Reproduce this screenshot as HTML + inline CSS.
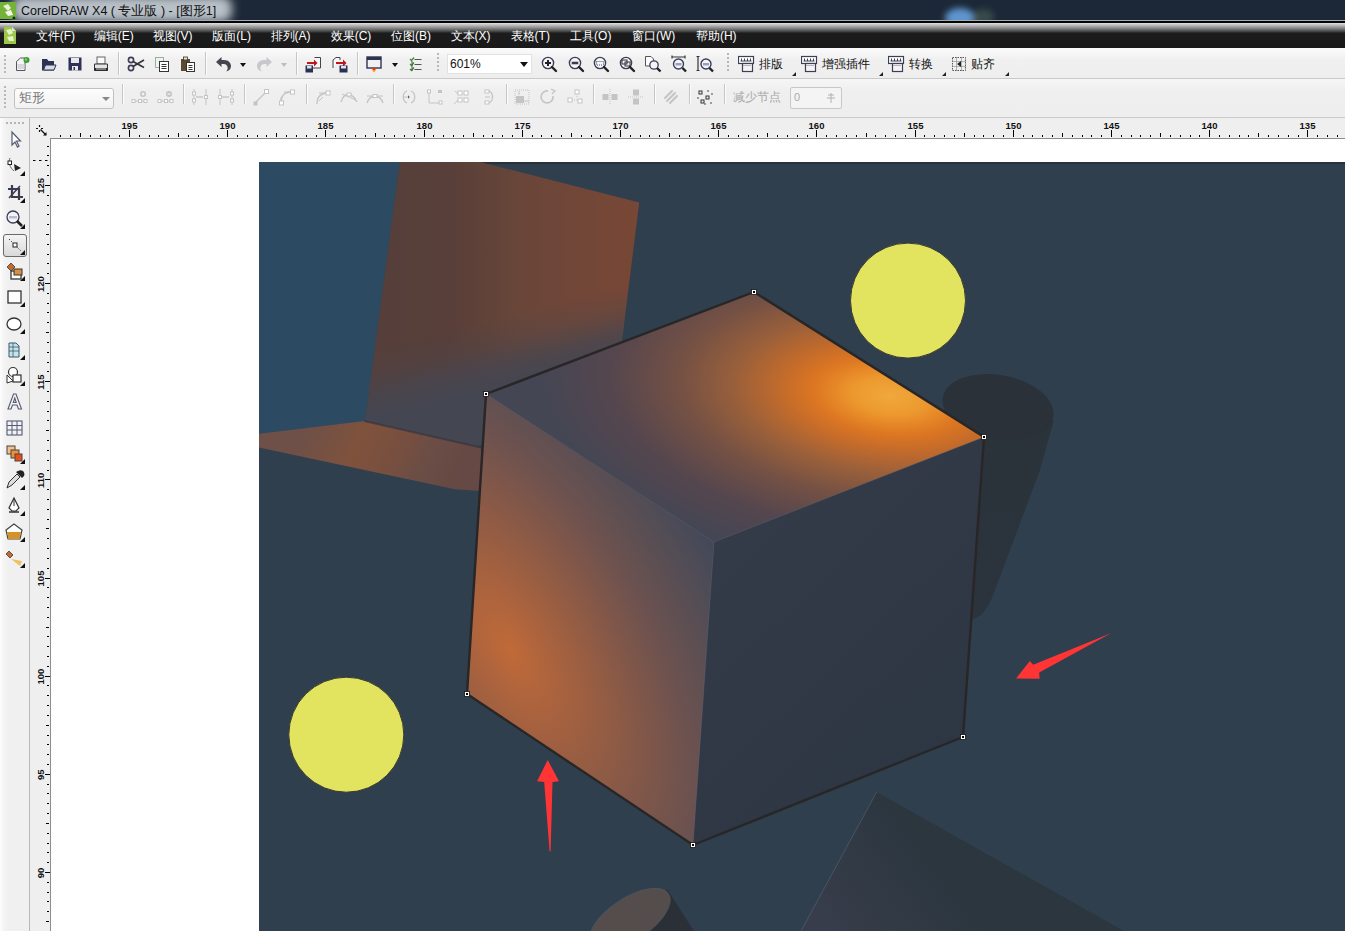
<!DOCTYPE html><html><head><meta charset="utf-8"><style>
*{margin:0;padding:0;box-sizing:border-box}
html,body{width:1345px;height:931px;overflow:hidden;background:#f0f0f0;font-family:"Liberation Sans",sans-serif}
.abs{position:absolute}
#title{left:0;top:0;width:1345px;height:20px;background:#1c2837}
#menubar{left:0;top:20px;width:1345px;height:29px;background:linear-gradient(#a6abb0 0,#a6abb0 1.3px,#050505 1.3px,#050505 2.7px,#e6e6e6 2.7px,#c8c8c8 4.5px,#8a8a8a 8px,#3a3a3a 12px,#1c1c1c 13px,#191919 28px)}
.mi{position:absolute;top:30px;color:#fff;font-size:12px;line-height:12px;white-space:nowrap}
#tb1{left:0;top:48px;width:1345px;height:30px;background:linear-gradient(#fbfbfb,#f0f0f0 40%,#eeeeee)}
#tb2{left:0;top:79px;width:1345px;height:38px;background:linear-gradient(#f6f6f6,#efefef 30%,#eeeeee)}
#l1{left:0;top:78px;width:1345px;height:1px;background:#c9c9c9}
#l2{left:0;top:117px;width:1345px;height:1px;background:#c9c9c9}
#ruler{left:0;top:118px;width:1345px;height:813px;background:#efefef}
#page{left:51px;top:139px;width:1294px;height:792px;background:#fff}
.sep{position:absolute;width:1px;background:#c4c4c4;border-right:1px solid #fff}
.tri{position:absolute;width:0;height:0;border-left:3.5px solid transparent;border-right:3.5px solid transparent;border-top:4px solid #111}
.tbt{position:absolute;font-size:12px;color:#111;line-height:12px;white-space:nowrap}
</style></head><body>
<div class="abs" id="title"></div>
<div class="abs" style="left:12px;top:-4px;width:220px;height:26px;background:#c2c9d0;border-radius:10px;filter:blur(5px);opacity:.95"></div>
<div class="abs" style="left:945px;top:8px;width:30px;height:20px;background:#6aa8e8;border-radius:50%;filter:blur(3px);opacity:.85"></div>
<div class="abs" style="left:972px;top:9px;width:22px;height:16px;background:#7a9a7a;border-radius:50%;filter:blur(3px);opacity:.3"></div>
<div class="abs" style="left:0;top:2px;width:16px;height:17px;background:#74b23a"></div>
<svg class="abs" style="left:0;top:2px" width="16" height="17"><path d="M3 4 L8 2 L11 6 L8 9 Z" fill="#e8f0d0"/><path d="M5 10 L11 8 L13 13 L8 14 Z" fill="#f4f8ea"/><circle cx="14" cy="16" r="1.5" fill="#142a0a"/></svg>
<div class="abs" style="left:21px;top:4px;font-size:12.5px;color:#101010;white-space:nowrap;line-height:15px">CorelDRAW X4 ( 专业版 ) - [图形1]</div>
<div class="abs" id="menubar"></div>
<svg class="abs" style="left:3px;top:26px" width="14" height="19"><path d="M1 1 H9 L13 5 V18 H1 Z" fill="#9bc84a"/><path d="M3 4 L8 3 L10 7 L6 9Z M4 11 L10 10 L11 15 L6 15Z" fill="#e6f2c8"/><path d="M9 1 L13 5 H9Z" fill="#dfe8cc"/></svg>
<div class="mi" style="left:35.7px">文件(F)</div>
<div class="mi" style="left:93.7px">编辑(E)</div>
<div class="mi" style="left:152.6px">视图(V)</div>
<div class="mi" style="left:212.3px">版面(L)</div>
<div class="mi" style="left:270.6px">排列(A)</div>
<div class="mi" style="left:330.7px">效果(C)</div>
<div class="mi" style="left:391px">位图(B)</div>
<div class="mi" style="left:450.6px">文本(X)</div>
<div class="mi" style="left:510.6px">表格(T)</div>
<div class="mi" style="left:570.1px">工具(O)</div>
<div class="mi" style="left:632px">窗口(W)</div>
<div class="mi" style="left:695.9px">帮助(H)</div>
<div class="abs" id="tb1"></div><div class="abs" id="l1"></div><div class="abs" id="tb2"></div><div class="abs" id="l2"></div>
<div class="abs" id="ruler"></div>
<div class="abs" id="page"></div>
<svg class="abs" style="left:4px;top:55px;" width="3" height="20" viewBox="0 0 3 20"><rect x="0" y="0" width="2" height="2" fill="#b8b8b8"/><rect x="0" y="4" width="2" height="2" fill="#b8b8b8"/><rect x="0" y="8" width="2" height="2" fill="#b8b8b8"/><rect x="0" y="12" width="2" height="2" fill="#b8b8b8"/><rect x="0" y="16" width="2" height="2" fill="#b8b8b8"/></svg>
<svg class="abs" style="left:15px;top:56px;" width="16" height="16" viewBox="0 0 16 16"><path d="M1.5 5.5 L5.5 2 H10 V14.5 H1.5 Z" fill="#f4f4f4" stroke="#55575f" stroke-width="1"/><rect x="2.5" y="8" width="7" height="5" fill="#d8d8dc"/><circle cx="11.5" cy="4" r="3" fill="#3a9a32"/><circle cx="11" cy="3.5" r="1.2" fill="#7fd070"/></svg>
<svg class="abs" style="left:41px;top:56px;" width="16" height="16" viewBox="0 0 16 16"><path d="M1 3 H6 L7.5 5 H13 V8 H1Z" fill="#2f3352"/><path d="M1 14.5 V6.5 H13 V14.5 Z" fill="#2f3352"/><path d="M2.5 14 L4.5 9 H15 L13 14Z" fill="#d9dbe3" stroke="#2f3352" stroke-width="1"/></svg>
<svg class="abs" style="left:68px;top:57px;" width="14" height="14" viewBox="0 0 14 14"><rect x="0.5" y="0.5" width="13" height="13" fill="#2e3259"/><rect x="3" y="1" width="8" height="5" fill="#e8e8ee"/><rect x="4" y="9" width="6" height="4.5" fill="#e8e8ee"/><rect x="5.5" y="10" width="1.5" height="3" fill="#2e3259"/></svg>
<svg class="abs" style="left:93px;top:56px;" width="16" height="16" viewBox="0 0 16 16"><rect x="4" y="1" width="8" height="7" fill="#fafafa" stroke="#666" stroke-width="1"/><path d="M1.5 8 H14.5 V14.5 H1.5Z" fill="#e4e4e4" stroke="#333" stroke-width="1"/><rect x="1" y="12" width="14" height="2.5" fill="#2a2a2a"/><rect x="3" y="12.5" width="10" height="1" fill="#d0d0d0"/></svg>
<div class="abs" style="left:118px;top:52px;width:1px;height:23px;background:#c6c6c6"></div><div class="abs" style="left:119px;top:52px;width:1px;height:23px;background:#fcfcfc"></div>
<svg class="abs" style="left:127px;top:56px;" width="18" height="16" viewBox="0 0 18 16"><circle cx="4" cy="4" r="2.6" fill="none" stroke="#3b3e55" stroke-width="1.6"/><circle cx="4" cy="12" r="2.6" fill="none" stroke="#3b3e55" stroke-width="1.6"/><path d="M6 5.5 L17 11.5 M6 10.5 L17 4" stroke="#333" stroke-width="1.6"/></svg>
<svg class="abs" style="left:154px;top:56px;" width="16" height="16" viewBox="0 0 16 16"><rect x="1.5" y="1.5" width="8" height="10" fill="#eef3ee" stroke="#9ab09a" stroke-width="1"/><rect x="5.5" y="5.5" width="9" height="10" fill="#fff" stroke="#333" stroke-width="1"/><path d="M7.5 8.5 H12.5 M7.5 10.5 H12.5 M7.5 12.5 H12.5" stroke="#333" stroke-width="1"/></svg>
<svg class="abs" style="left:180px;top:56px;" width="16" height="16" viewBox="0 0 16 16"><rect x="1" y="3" width="9" height="12" fill="#5a4a34"/><rect x="3.5" y="1" width="4" height="3" fill="#e6e0cc" stroke="#333" stroke-width=".8"/><rect x="6.5" y="6.5" width="8" height="9" fill="#fff" stroke="#333" stroke-width="1"/><path d="M8.5 9.5 H12.5 M8.5 11.5 H12.5 M8.5 13.5 H12.5" stroke="#333" stroke-width="1"/></svg>
<div class="abs" style="left:205px;top:52px;width:1px;height:23px;background:#c6c6c6"></div><div class="abs" style="left:206px;top:52px;width:1px;height:23px;background:#fcfcfc"></div>
<svg class="abs" style="left:215px;top:56px;" width="17" height="16" viewBox="0 0 17 16"><path d="M1 6 L6.5 1 V4 H9 C13.5 4 16 7 16 10 C16 13 14 15 11 15.5 C12.5 14 13 12.5 12.5 11 C12 9 10.5 8 9 8 H6.5 V11Z" fill="#44464e"/></svg>
<div class="tri" style="left:240px;top:63px"></div>
<svg class="abs" style="left:256px;top:56px;" width="17" height="16" viewBox="0 0 17 16"><path d="M16 6 L10.5 1 V4 H8 C3.5 4 1 7 1 10 C1 13 3 15 6 15.5 C4.5 14 4 12.5 4.5 11 C5 9 6.5 8 8 8 H10.5 V11Z" fill="#c8c8cc"/></svg>
<div class="tri" style="left:281px;top:63px;border-top-color:#bdbdbd"></div>
<div class="abs" style="left:296px;top:52px;width:1px;height:23px;background:#c6c6c6"></div><div class="abs" style="left:297px;top:52px;width:1px;height:23px;background:#fcfcfc"></div>
<svg class="abs" style="left:305px;top:56px;" width="17" height="17" viewBox="0 0 17 17"><path d="M9.5 1.5 H15.5 V12 H8" fill="#f8f8f8" stroke="#444" stroke-width="1"/><path d="M2 6 H9 V3.5 L12.5 7 L9 10.5 V8 H2Z" fill="#c0161a"/><rect x="0.5" y="9.5" width="7.5" height="7" fill="#2b2f55"/><rect x="2" y="10" width="4.5" height="2.5" fill="#e0e0ea"/></svg>
<svg class="abs" style="left:331px;top:56px;" width="18" height="17" viewBox="0 0 18 17"><path d="M2 12 V4 L5 1.5 H9 V4" fill="#f8f8f8" stroke="#444" stroke-width="1"/><path d="M5 6 H12 V3.5 L15.5 7 L12 10.5 V8 H5Z" fill="#c0161a"/><rect x="8.5" y="9.5" width="8" height="7" fill="#2b2f55"/><rect x="10" y="10" width="5" height="2.5" fill="#e0e0ea"/></svg>
<div class="abs" style="left:357px;top:52px;width:1px;height:23px;background:#c6c6c6"></div><div class="abs" style="left:358px;top:52px;width:1px;height:23px;background:#fcfcfc"></div>
<svg class="abs" style="left:366px;top:56px;" width="16" height="17" viewBox="0 0 16 17"><rect x="1" y="1" width="14" height="11" fill="#f0f0f0" stroke="#2f3352" stroke-width="1.4"/><rect x="1" y="1" width="14" height="3" fill="#2f3352"/><path d="M5 12 L8 15 L11 12Z" fill="#e23a1a"/><path d="M6 14 L8 16.5 L10 14" fill="#f0a020"/></svg>
<div class="tri" style="left:392px;top:63px"></div>
<svg class="abs" style="left:409px;top:56px;" width="13" height="16" viewBox="0 0 13 16"><path d="M1 3 L2.5 4.5 L5 1.5 M1 8 L2.5 9.5 L5 6.5 M1 13 L2.5 14.5 L5 11.5" stroke="#3a8a2a" stroke-width="1.2" fill="none"/><path d="M5.5 3.5 H12.5 M5.5 8.5 H12.5 M5.5 13.5 H12.5 M3 5 V15" stroke="#555" stroke-width="1" fill="none"/></svg>
<svg class="abs" style="left:437px;top:53px;" width="3" height="22" viewBox="0 0 3 22"><rect x="0" y="0" width="2" height="2" fill="#b8b8b8"/><rect x="0" y="4" width="2" height="2" fill="#b8b8b8"/><rect x="0" y="8" width="2" height="2" fill="#b8b8b8"/><rect x="0" y="12" width="2" height="2" fill="#b8b8b8"/><rect x="0" y="16" width="2" height="2" fill="#b8b8b8"/></svg>
<div class="abs" style="left:447px;top:54px;width:85px;height:20px;background:#fff;border:1px solid #e2e2e2"></div>
<div class="abs" style="left:450px;top:57px;font-size:12px;line-height:14px;color:#111">601%</div>
<div class="tri" style="left:520px;top:62px;border-left-width:4px;border-right-width:4px;border-top-width:5px"></div>
<svg class="abs" style="left:540px;top:55px;" width="18" height="18" viewBox="0 0 18 18"><circle cx="8" cy="8" r="5.6" fill="#f4f5fa" stroke="#3a3d55" stroke-width="1.4"/><path d="M5 8 H11 M8 5 V11" stroke="#222" stroke-width="2"/><path d="M12 12 L16 16" stroke="#222" stroke-width="2.4" stroke-linecap="round"/></svg>
<svg class="abs" style="left:567px;top:55px;" width="18" height="18" viewBox="0 0 18 18"><circle cx="8" cy="8" r="5.6" fill="#f4f5fa" stroke="#3a3d55" stroke-width="1.4"/><rect x="4.5" y="6.5" width="7" height="3" fill="#8a8ea8"/><path d="M5 8 H11" stroke="#222" stroke-width="1.5"/><path d="M12 12 L16 16" stroke="#222" stroke-width="2.4" stroke-linecap="round"/></svg>
<svg class="abs" style="left:592px;top:55px;" width="18" height="18" viewBox="0 0 18 18"><circle cx="8" cy="8" r="5.6" fill="#f4f5fa" stroke="#3a3d55" stroke-width="1.4"/><path d="M4.5 6.5 H11.5 V10 H4.5Z" fill="none" stroke="#555" stroke-width="1" stroke-dasharray="1 1"/><path d="M12 12 L16 16" stroke="#222" stroke-width="2.4" stroke-linecap="round"/></svg>
<svg class="abs" style="left:618px;top:55px;" width="18" height="18" viewBox="0 0 18 18"><circle cx="8" cy="8" r="5.6" fill="#f4f5fa" stroke="#3a3d55" stroke-width="1.4"/><rect x="4" y="5" width="5" height="4" fill="none" stroke="#333" stroke-width="1"/><rect x="7" y="7" width="5" height="4" fill="none" stroke="#333" stroke-width="1"/><path d="M12 12 L16 16" stroke="#222" stroke-width="2.4" stroke-linecap="round"/></svg>
<svg class="abs" style="left:644px;top:55px;" width="18" height="18" viewBox="0 0 18 18"><path d="M1.5 1.5 H7 L9.5 4 V11 H1.5Z" fill="#fff" stroke="#555" stroke-width="1"/><circle cx="10" cy="10" r="4.2" fill="#f4f5fa" stroke="#3a3d55" stroke-width="1.3"/><path d="M13 13 L16.5 16.5" stroke="#222" stroke-width="2.4"/></svg>
<svg class="abs" style="left:670px;top:55px;" width="18" height="18" viewBox="0 0 18 18"><path d="M2 2 H15 M2 0.5 V3.5 M15 0.5 V3.5" stroke="#333" stroke-width="1.2"/><circle cx="8.5" cy="9" r="5" fill="#f4f5fa" stroke="#3a3d55" stroke-width="1.4"/><rect x="5.5" y="8" width="6" height="2.5" fill="#9aa0b8"/><path d="M12.5 13 L16 16.5" stroke="#222" stroke-width="2.4"/></svg>
<svg class="abs" style="left:696px;top:55px;" width="18" height="18" viewBox="0 0 18 18"><path d="M2 1.5 V15.5 M0.5 1.5 H3.5 M0.5 15.5 H3.5" stroke="#333" stroke-width="1.2"/><circle cx="10" cy="9" r="5" fill="#f4f5fa" stroke="#3a3d55" stroke-width="1.4"/><rect x="7" y="8" width="6" height="2.5" fill="#9aa0b8"/><path d="M13.5 13 L17 16.5" stroke="#222" stroke-width="2.4"/></svg>
<svg class="abs" style="left:727px;top:53px;" width="3" height="22" viewBox="0 0 3 22"><rect x="0" y="0" width="2" height="2" fill="#b8b8b8"/><rect x="0" y="4" width="2" height="2" fill="#b8b8b8"/><rect x="0" y="8" width="2" height="2" fill="#b8b8b8"/><rect x="0" y="12" width="2" height="2" fill="#b8b8b8"/><rect x="0" y="16" width="2" height="2" fill="#b8b8b8"/></svg>
<svg class="abs" style="left:738px;top:55px;" width="17" height="18" viewBox="0 0 17 18"><rect x="0.5" y="1.5" width="15" height="7" fill="#fff" stroke="#3d4055" stroke-width="1.2"/><path d="M2.5 6 H13.5 M3.5 3.5 V6 M6.5 3.5 V6 M9.5 3.5 V6 M12.5 3.5 V6" stroke="#3d4055" stroke-width="1"/><rect x="4.5" y="8.5" width="10" height="8" fill="#f4f4f8" stroke="#3d4055" stroke-width="1.2"/><path d="M5.5 10.5 H13.5" stroke="#777" stroke-width="1" stroke-dasharray="1 1"/></svg>
<div class="tbt" style="left:759px;top:58px">排版</div>
<svg class="abs" style="left:801px;top:55px;" width="17" height="18" viewBox="0 0 17 18"><rect x="0.5" y="1.5" width="15" height="7" fill="#fff" stroke="#3d4055" stroke-width="1.2"/><path d="M2.5 6 H13.5 M3.5 3.5 V6 M6.5 3.5 V6 M9.5 3.5 V6 M12.5 3.5 V6" stroke="#3d4055" stroke-width="1"/><rect x="4.5" y="8.5" width="10" height="8" fill="#f4f4f8" stroke="#3d4055" stroke-width="1.2"/><path d="M5.5 10.5 H13.5" stroke="#777" stroke-width="1" stroke-dasharray="1 1"/></svg>
<div class="tbt" style="left:822px;top:58px">增强插件</div>
<svg class="abs" style="left:888px;top:55px;" width="17" height="18" viewBox="0 0 17 18"><rect x="0.5" y="1.5" width="15" height="7" fill="#fff" stroke="#3d4055" stroke-width="1.2"/><path d="M2.5 6 H13.5 M3.5 3.5 V6 M6.5 3.5 V6 M9.5 3.5 V6 M12.5 3.5 V6" stroke="#3d4055" stroke-width="1"/><rect x="4.5" y="8.5" width="10" height="8" fill="#f4f4f8" stroke="#3d4055" stroke-width="1.2"/><path d="M5.5 10.5 H13.5" stroke="#777" stroke-width="1" stroke-dasharray="1 1"/></svg>
<div class="tbt" style="left:909px;top:58px">转换</div>
<svg class="abs" style="left:951px;top:56px;" width="16" height="16" viewBox="0 0 16 16"><rect x="1.5" y="1.5" width="13" height="13" fill="none" stroke="#555" stroke-width="1" stroke-dasharray="1.5 1"/><path d="M1.5 5.5 H14.5 M1.5 10.5 H14.5 M5.5 1.5 V14.5 M10.5 1.5 V14.5" stroke="#777" stroke-width="1" stroke-dasharray="1 1"/><path d="M6 8 L10 5 V11Z" fill="#222"/></svg>
<div class="tbt" style="left:971px;top:58px">贴齐</div>
<svg class="abs" style="left:792px;top:72px;" width="4" height="4" viewBox="0 0 4 4"><path d="M4 0 V4 H0Z" fill="#222"/></svg>
<svg class="abs" style="left:879px;top:72px;" width="4" height="4" viewBox="0 0 4 4"><path d="M4 0 V4 H0Z" fill="#222"/></svg>
<svg class="abs" style="left:942px;top:72px;" width="4" height="4" viewBox="0 0 4 4"><path d="M4 0 V4 H0Z" fill="#222"/></svg>
<svg class="abs" style="left:1005px;top:72px;" width="4" height="4" viewBox="0 0 4 4"><path d="M4 0 V4 H0Z" fill="#222"/></svg>
<svg class="abs" style="left:4px;top:86px;" width="3" height="26" viewBox="0 0 3 26"><rect x="0" y="0" width="2" height="2" fill="#b8b8b8"/><rect x="0" y="4" width="2" height="2" fill="#b8b8b8"/><rect x="0" y="8" width="2" height="2" fill="#b8b8b8"/><rect x="0" y="12" width="2" height="2" fill="#b8b8b8"/><rect x="0" y="16" width="2" height="2" fill="#b8b8b8"/><rect x="0" y="20" width="2" height="2" fill="#b8b8b8"/></svg>
<div class="abs" style="left:14px;top:88px;width:100px;height:21px;background:linear-gradient(#fdfdfd,#f2f2f2);border:1px solid #c2c2c2;border-radius:3px"></div>
<div class="abs" style="left:19px;top:91px;font-size:13px;line-height:14px;color:#777">矩形</div>
<div class="tri" style="left:102px;top:97px;border-top-color:#888;border-left-width:4px;border-right-width:4px;border-top-width:4px"></div>
<div class="abs" style="left:122px;top:84px;width:1px;height:20px;background:#c6c6c6"></div><div class="abs" style="left:123px;top:84px;width:1px;height:20px;background:#fcfcfc"></div>
<svg class="abs" style="left:131px;top:88px;" width="18" height="18" viewBox="0 0 18 18"><circle cx="12" cy="6" r="3" fill="#c4c4c4"/><path d="M10.5 6 H13.5 M12 4.5 V7.5" stroke="#fff" stroke-width="1"/><path d="M2 13 H16" stroke="#c4c4c4"/><rect x="1" y="11.5" width="3" height="3" fill="#fff" stroke="#c4c4c4"/><rect x="7.5" y="11.5" width="3" height="3" fill="#fff" stroke="#c4c4c4"/><rect x="13" y="11.5" width="3" height="3" fill="#fff" stroke="#c4c4c4"/></svg>
<svg class="abs" style="left:157px;top:88px;" width="18" height="18" viewBox="0 0 18 18"><circle cx="12" cy="6" r="3" fill="#c4c4c4"/><path d="M10.5 6 H13.5" stroke="#fff" stroke-width="1"/><path d="M2 13 H16" stroke="#c4c4c4"/><rect x="1" y="11.5" width="3" height="3" fill="#fff" stroke="#c4c4c4"/><rect x="7.5" y="11.5" width="3" height="3" fill="#fff" stroke="#c4c4c4"/><rect x="13" y="11.5" width="3" height="3" fill="#fff" stroke="#c4c4c4"/></svg>
<div class="abs" style="left:183px;top:84px;width:1px;height:20px;background:#c6c6c6"></div><div class="abs" style="left:184px;top:84px;width:1px;height:20px;background:#fcfcfc"></div>
<svg class="abs" style="left:191px;top:88px;" width="18" height="18" viewBox="0 0 18 18"><path d="M3 1 V17 M15 1 V17" stroke="#c4c4c4"/><rect x="1.5" y="4" width="3" height="3" fill="#fff" stroke="#c4c4c4"/><rect x="1.5" y="11" width="3" height="3" fill="#fff" stroke="#c4c4c4"/><rect x="13.5" y="7.5" width="3" height="3" fill="#fff" stroke="#c4c4c4"/><path d="M5 9 H12" stroke="#c4c4c4" stroke-width="1.4"/></svg>
<svg class="abs" style="left:217px;top:88px;" width="18" height="18" viewBox="0 0 18 18"><path d="M3 1 V17 M15 1 V17" stroke="#c4c4c4"/><rect x="1.5" y="7.5" width="3" height="3" fill="#fff" stroke="#c4c4c4"/><rect x="13.5" y="4" width="3" height="3" fill="#fff" stroke="#c4c4c4"/><rect x="13.5" y="11" width="3" height="3" fill="#fff" stroke="#c4c4c4"/><path d="M5 9 H12" stroke="#c4c4c4" stroke-width="1.4"/></svg>
<div class="abs" style="left:244px;top:84px;width:1px;height:20px;background:#c6c6c6"></div><div class="abs" style="left:245px;top:84px;width:1px;height:20px;background:#fcfcfc"></div>
<svg class="abs" style="left:252px;top:88px;" width="18" height="18" viewBox="0 0 18 18"><path d="M3 15 L14 4" stroke="#c4c4c4" stroke-width="1.3"/><rect x="12.5" y="1.5" width="4" height="4" fill="#fff" stroke="#c4c4c4"/><rect x="1.5" y="13.5" width="4" height="4" fill="#c4c4c4"/></svg>
<svg class="abs" style="left:278px;top:88px;" width="18" height="18" viewBox="0 0 18 18"><path d="M3 15 C3 8 6 4 13 4" stroke="#c4c4c4" stroke-width="1.3" fill="none"/><rect x="12.5" y="2" width="4" height="4" fill="#fff" stroke="#c4c4c4"/><rect x="1.5" y="13" width="4" height="4" fill="#fff" stroke="#c4c4c4"/><path d="M3 9 V13 M6 4 H12" stroke="#c4c4c4"/></svg>
<div class="abs" style="left:306px;top:84px;width:1px;height:20px;background:#c6c6c6"></div><div class="abs" style="left:307px;top:84px;width:1px;height:20px;background:#fcfcfc"></div>
<svg class="abs" style="left:314px;top:88px;" width="18" height="18" viewBox="0 0 18 18"><path d="M3 16 C3 9 7 5 14 5" stroke="#c4c4c4" stroke-width="1.3" fill="none"/><path d="M5 5 H16 M9 9 L5 13" stroke="#c4c4c4"/><rect x="12" y="3" width="4" height="4" fill="#fff" stroke="#c4c4c4"/></svg>
<svg class="abs" style="left:340px;top:88px;" width="18" height="18" viewBox="0 0 18 18"><path d="M1 14 C4 4 12 4 17 14" stroke="#c4c4c4" stroke-width="1.3" fill="none"/><path d="M2 6 L16 12" stroke="#c4c4c4"/><rect x="7" y="5" width="4" height="3" fill="#fff" stroke="#c4c4c4"/></svg>
<svg class="abs" style="left:366px;top:88px;" width="18" height="18" viewBox="0 0 18 18"><path d="M1 15 C4 6 14 6 17 15" stroke="#c4c4c4" stroke-width="1.3" fill="none"/><path d="M1 8 H17" stroke="#c4c4c4"/><rect x="7" y="6.5" width="4" height="3" fill="#fff" stroke="#c4c4c4"/></svg>
<div class="abs" style="left:393px;top:84px;width:1px;height:20px;background:#c6c6c6"></div><div class="abs" style="left:394px;top:84px;width:1px;height:20px;background:#fcfcfc"></div>
<svg class="abs" style="left:400px;top:88px;" width="18" height="18" viewBox="0 0 18 18"><path d="M7 3 C2 5 2 13 7 15 M11 3 C16 5 16 13 11 15" stroke="#c4c4c4" stroke-width="1.3" fill="none"/><path d="M3 9 H10 M8 7 L10 9 L8 11" stroke="#c4c4c4"/></svg>
<svg class="abs" style="left:426px;top:88px;" width="18" height="18" viewBox="0 0 18 18"><path d="M3 2 V15 H16" stroke="#c4c4c4" fill="none"/><rect x="1.5" y="2" width="3" height="3" fill="#fff" stroke="#c4c4c4"/><rect x="12" y="2" width="4" height="3" fill="#c4c4c4"/><rect x="13" y="13" width="3" height="3" fill="#fff" stroke="#c4c4c4"/></svg>
<svg class="abs" style="left:453px;top:88px;" width="18" height="18" viewBox="0 0 18 18"><rect x="5" y="3" width="4" height="4" fill="#fff" stroke="#c4c4c4"/><rect x="11" y="3" width="4" height="4" fill="#fff" stroke="#c4c4c4"/><rect x="5" y="10" width="4" height="4" fill="#fff" stroke="#c4c4c4"/><rect x="11" y="10" width="4" height="4" fill="#fff" stroke="#c4c4c4"/><path d="M1 16 L5 12 M2 3 L5 6" stroke="#c4c4c4"/></svg>
<svg class="abs" style="left:479px;top:88px;" width="18" height="18" viewBox="0 0 18 18"><path d="M9 3 C15 3 15 15 9 15" stroke="#c4c4c4" stroke-width="1.3" fill="none"/><rect x="6" y="2" width="4" height="3" fill="#fff" stroke="#c4c4c4"/><rect x="6" y="13" width="4" height="3" fill="#fff" stroke="#c4c4c4"/><path d="M6 9 H11" stroke="#c4c4c4"/></svg>
<div class="abs" style="left:506px;top:84px;width:1px;height:20px;background:#c6c6c6"></div><div class="abs" style="left:507px;top:84px;width:1px;height:20px;background:#fcfcfc"></div>
<svg class="abs" style="left:513px;top:88px;" width="18" height="18" viewBox="0 0 18 18"><rect x="2" y="2" width="14" height="14" fill="none" stroke="#c4c4c4" stroke-dasharray="1 1"/><rect x="3" y="8" width="8" height="7" fill="#c4c4c4"/><path d="M11 13 H16 M6 3 V7" stroke="#c4c4c4"/></svg>
<svg class="abs" style="left:539px;top:88px;" width="18" height="18" viewBox="0 0 18 18"><path d="M14 8 A6 6 0 1 1 9 3" stroke="#c4c4c4" stroke-width="1.6" fill="none"/><path d="M12 1 L16 3 L13 6" stroke="#c4c4c4" stroke-width="1.3" fill="none"/></svg>
<svg class="abs" style="left:566px;top:88px;" width="18" height="18" viewBox="0 0 18 18"><rect x="9" y="2" width="4" height="4" fill="#fff" stroke="#c4c4c4"/><rect x="2" y="10" width="4" height="4" fill="#fff" stroke="#c4c4c4"/><rect x="12" y="11" width="4" height="4" fill="#fff" stroke="#c4c4c4"/><path d="M6 12 H11 M11 6 V10" stroke="#c4c4c4" stroke-dasharray="1 1"/></svg>
<div class="abs" style="left:593px;top:84px;width:1px;height:20px;background:#c6c6c6"></div><div class="abs" style="left:594px;top:84px;width:1px;height:20px;background:#fcfcfc"></div>
<svg class="abs" style="left:601px;top:88px;" width="18" height="18" viewBox="0 0 18 18"><rect x="1.5" y="6" width="6" height="6" fill="#c4c4c4"/><rect x="10.5" y="6" width="6" height="6" fill="#c4c4c4"/><path d="M9 1 V17" stroke="#c4c4c4" stroke-dasharray="1 1"/></svg>
<svg class="abs" style="left:627px;top:88px;" width="18" height="18" viewBox="0 0 18 18"><rect x="6" y="1.5" width="6" height="6" fill="#c4c4c4"/><rect x="6" y="10.5" width="6" height="6" fill="#c4c4c4"/><path d="M1 9 H17" stroke="#c4c4c4" stroke-dasharray="1 1"/></svg>
<div class="abs" style="left:654px;top:84px;width:1px;height:20px;background:#c6c6c6"></div><div class="abs" style="left:655px;top:84px;width:1px;height:20px;background:#fcfcfc"></div>
<svg class="abs" style="left:662px;top:88px;" width="18" height="18" viewBox="0 0 18 18"><path d="M3 10 L10 3 M5 13 L13 5 M8 15 L15 8" stroke="#c4c4c4" stroke-width="2" stroke-linecap="round"/></svg>
<div class="abs" style="left:689px;top:84px;width:1px;height:20px;background:#c6c6c6"></div><div class="abs" style="left:690px;top:84px;width:1px;height:20px;background:#fcfcfc"></div>
<svg class="abs" style="left:696px;top:88px;" width="18" height="18" viewBox="0 0 18 18"><rect x="3" y="3" width="3" height="3" fill="none" stroke="#333"/><rect x="10" y="8" width="3" height="3" fill="none" stroke="#333"/><rect x="5" y="12" width="3" height="3" fill="none" stroke="#333"/><circle cx="12" cy="3" r=".8" fill="#333"/><circle cx="2" cy="10" r=".8" fill="#333"/><circle cx="15" cy="15" r=".8" fill="#333"/><circle cx="16" cy="6" r=".8" fill="#333"/><circle cx="9" cy="16" r=".8" fill="#333"/></svg>
<div class="abs" style="left:724px;top:84px;width:1px;height:20px;background:#c6c6c6"></div><div class="abs" style="left:725px;top:84px;width:1px;height:20px;background:#fcfcfc"></div>
<div class="abs" style="left:733px;top:90px;font-size:12px;line-height:14px;color:#a8a8a8">减少节点</div>
<div class="abs" style="left:790px;top:87px;width:52px;height:22px;background:#f4f4f4;border:1px solid #c8c8c8;border-radius:2px"></div>
<div class="abs" style="left:794px;top:91px;font-size:11px;line-height:13px;color:#aaa">0</div>
<svg class="abs" style="left:826px;top:92px;" width="10" height="12" viewBox="0 0 10 12"><path d="M5 1 V11 M1 6 H9 M2 3 H8" stroke="#b0b0b0" stroke-width="1"/></svg>
<svg class="abs" style="left:0;top:0" width="1345" height="140"><rect x="60" y="135" width="1" height="2" fill="#000"/><rect x="70" y="135" width="1" height="2" fill="#000"/><rect x="80" y="133" width="1" height="4" fill="#000"/><rect x="90" y="135" width="1" height="2" fill="#000"/><rect x="100" y="135" width="1" height="2" fill="#000"/><rect x="109" y="135" width="1" height="2" fill="#000"/><rect x="119" y="135" width="1" height="2" fill="#000"/><rect x="129" y="130" width="1" height="7" fill="#000"/><text x="129.5" y="129" font-size="9.5" font-weight="bold" text-anchor="middle" fill="#111" font-family="Liberation Sans">195</text><rect x="139" y="135" width="1" height="2" fill="#000"/><rect x="149" y="135" width="1" height="2" fill="#000"/><rect x="158" y="135" width="1" height="2" fill="#000"/><rect x="168" y="135" width="1" height="2" fill="#000"/><rect x="178" y="133" width="1" height="4" fill="#000"/><rect x="188" y="135" width="1" height="2" fill="#000"/><rect x="198" y="135" width="1" height="2" fill="#000"/><rect x="208" y="135" width="1" height="2" fill="#000"/><rect x="217" y="135" width="1" height="2" fill="#000"/><rect x="227" y="130" width="1" height="7" fill="#000"/><text x="227.5" y="129" font-size="9.5" font-weight="bold" text-anchor="middle" fill="#111" font-family="Liberation Sans">190</text><rect x="237" y="135" width="1" height="2" fill="#000"/><rect x="247" y="135" width="1" height="2" fill="#000"/><rect x="257" y="135" width="1" height="2" fill="#000"/><rect x="266" y="135" width="1" height="2" fill="#000"/><rect x="276" y="133" width="1" height="4" fill="#000"/><rect x="286" y="135" width="1" height="2" fill="#000"/><rect x="296" y="135" width="1" height="2" fill="#000"/><rect x="306" y="135" width="1" height="2" fill="#000"/><rect x="316" y="135" width="1" height="2" fill="#000"/><rect x="325" y="130" width="1" height="7" fill="#000"/><text x="325.5" y="129" font-size="9.5" font-weight="bold" text-anchor="middle" fill="#111" font-family="Liberation Sans">185</text><rect x="335" y="135" width="1" height="2" fill="#000"/><rect x="345" y="135" width="1" height="2" fill="#000"/><rect x="355" y="135" width="1" height="2" fill="#000"/><rect x="365" y="135" width="1" height="2" fill="#000"/><rect x="375" y="133" width="1" height="4" fill="#000"/><rect x="384" y="135" width="1" height="2" fill="#000"/><rect x="394" y="135" width="1" height="2" fill="#000"/><rect x="404" y="135" width="1" height="2" fill="#000"/><rect x="414" y="135" width="1" height="2" fill="#000"/><rect x="424" y="130" width="1" height="7" fill="#000"/><text x="424.5" y="129" font-size="9.5" font-weight="bold" text-anchor="middle" fill="#111" font-family="Liberation Sans">180</text><rect x="433" y="135" width="1" height="2" fill="#000"/><rect x="443" y="135" width="1" height="2" fill="#000"/><rect x="453" y="135" width="1" height="2" fill="#000"/><rect x="463" y="135" width="1" height="2" fill="#000"/><rect x="473" y="133" width="1" height="4" fill="#000"/><rect x="483" y="135" width="1" height="2" fill="#000"/><rect x="492" y="135" width="1" height="2" fill="#000"/><rect x="502" y="135" width="1" height="2" fill="#000"/><rect x="512" y="135" width="1" height="2" fill="#000"/><rect x="522" y="130" width="1" height="7" fill="#000"/><text x="522.5" y="129" font-size="9.5" font-weight="bold" text-anchor="middle" fill="#111" font-family="Liberation Sans">175</text><rect x="532" y="135" width="1" height="2" fill="#000"/><rect x="541" y="135" width="1" height="2" fill="#000"/><rect x="551" y="135" width="1" height="2" fill="#000"/><rect x="561" y="135" width="1" height="2" fill="#000"/><rect x="571" y="133" width="1" height="4" fill="#000"/><rect x="581" y="135" width="1" height="2" fill="#000"/><rect x="591" y="135" width="1" height="2" fill="#000"/><rect x="600" y="135" width="1" height="2" fill="#000"/><rect x="610" y="135" width="1" height="2" fill="#000"/><rect x="620" y="130" width="1" height="7" fill="#000"/><text x="620.5" y="129" font-size="9.5" font-weight="bold" text-anchor="middle" fill="#111" font-family="Liberation Sans">170</text><rect x="630" y="135" width="1" height="2" fill="#000"/><rect x="640" y="135" width="1" height="2" fill="#000"/><rect x="649" y="135" width="1" height="2" fill="#000"/><rect x="659" y="135" width="1" height="2" fill="#000"/><rect x="669" y="133" width="1" height="4" fill="#000"/><rect x="679" y="135" width="1" height="2" fill="#000"/><rect x="689" y="135" width="1" height="2" fill="#000"/><rect x="699" y="135" width="1" height="2" fill="#000"/><rect x="708" y="135" width="1" height="2" fill="#000"/><rect x="718" y="130" width="1" height="7" fill="#000"/><text x="718.5" y="129" font-size="9.5" font-weight="bold" text-anchor="middle" fill="#111" font-family="Liberation Sans">165</text><rect x="728" y="135" width="1" height="2" fill="#000"/><rect x="738" y="135" width="1" height="2" fill="#000"/><rect x="748" y="135" width="1" height="2" fill="#000"/><rect x="757" y="135" width="1" height="2" fill="#000"/><rect x="767" y="133" width="1" height="4" fill="#000"/><rect x="777" y="135" width="1" height="2" fill="#000"/><rect x="787" y="135" width="1" height="2" fill="#000"/><rect x="797" y="135" width="1" height="2" fill="#000"/><rect x="807" y="135" width="1" height="2" fill="#000"/><rect x="816" y="130" width="1" height="7" fill="#000"/><text x="816.5" y="129" font-size="9.5" font-weight="bold" text-anchor="middle" fill="#111" font-family="Liberation Sans">160</text><rect x="826" y="135" width="1" height="2" fill="#000"/><rect x="836" y="135" width="1" height="2" fill="#000"/><rect x="846" y="135" width="1" height="2" fill="#000"/><rect x="856" y="135" width="1" height="2" fill="#000"/><rect x="866" y="133" width="1" height="4" fill="#000"/><rect x="875" y="135" width="1" height="2" fill="#000"/><rect x="885" y="135" width="1" height="2" fill="#000"/><rect x="895" y="135" width="1" height="2" fill="#000"/><rect x="905" y="135" width="1" height="2" fill="#000"/><rect x="915" y="130" width="1" height="7" fill="#000"/><text x="915.5" y="129" font-size="9.5" font-weight="bold" text-anchor="middle" fill="#111" font-family="Liberation Sans">155</text><rect x="924" y="135" width="1" height="2" fill="#000"/><rect x="934" y="135" width="1" height="2" fill="#000"/><rect x="944" y="135" width="1" height="2" fill="#000"/><rect x="954" y="135" width="1" height="2" fill="#000"/><rect x="964" y="133" width="1" height="4" fill="#000"/><rect x="974" y="135" width="1" height="2" fill="#000"/><rect x="983" y="135" width="1" height="2" fill="#000"/><rect x="993" y="135" width="1" height="2" fill="#000"/><rect x="1003" y="135" width="1" height="2" fill="#000"/><rect x="1013" y="130" width="1" height="7" fill="#000"/><text x="1013.5" y="129" font-size="9.5" font-weight="bold" text-anchor="middle" fill="#111" font-family="Liberation Sans">150</text><rect x="1023" y="135" width="1" height="2" fill="#000"/><rect x="1032" y="135" width="1" height="2" fill="#000"/><rect x="1042" y="135" width="1" height="2" fill="#000"/><rect x="1052" y="135" width="1" height="2" fill="#000"/><rect x="1062" y="133" width="1" height="4" fill="#000"/><rect x="1072" y="135" width="1" height="2" fill="#000"/><rect x="1082" y="135" width="1" height="2" fill="#000"/><rect x="1091" y="135" width="1" height="2" fill="#000"/><rect x="1101" y="135" width="1" height="2" fill="#000"/><rect x="1111" y="130" width="1" height="7" fill="#000"/><text x="1111.5" y="129" font-size="9.5" font-weight="bold" text-anchor="middle" fill="#111" font-family="Liberation Sans">145</text><rect x="1121" y="135" width="1" height="2" fill="#000"/><rect x="1131" y="135" width="1" height="2" fill="#000"/><rect x="1140" y="135" width="1" height="2" fill="#000"/><rect x="1150" y="135" width="1" height="2" fill="#000"/><rect x="1160" y="133" width="1" height="4" fill="#000"/><rect x="1170" y="135" width="1" height="2" fill="#000"/><rect x="1180" y="135" width="1" height="2" fill="#000"/><rect x="1190" y="135" width="1" height="2" fill="#000"/><rect x="1199" y="135" width="1" height="2" fill="#000"/><rect x="1209" y="130" width="1" height="7" fill="#000"/><text x="1209.5" y="129" font-size="9.5" font-weight="bold" text-anchor="middle" fill="#111" font-family="Liberation Sans">140</text><rect x="1219" y="135" width="1" height="2" fill="#000"/><rect x="1229" y="135" width="1" height="2" fill="#000"/><rect x="1239" y="135" width="1" height="2" fill="#000"/><rect x="1248" y="135" width="1" height="2" fill="#000"/><rect x="1258" y="133" width="1" height="4" fill="#000"/><rect x="1268" y="135" width="1" height="2" fill="#000"/><rect x="1278" y="135" width="1" height="2" fill="#000"/><rect x="1288" y="135" width="1" height="2" fill="#000"/><rect x="1298" y="135" width="1" height="2" fill="#000"/><rect x="1307" y="130" width="1" height="7" fill="#000"/><text x="1307.5" y="129" font-size="9.5" font-weight="bold" text-anchor="middle" fill="#111" font-family="Liberation Sans">135</text><rect x="1317" y="135" width="1" height="2" fill="#000"/><rect x="1327" y="135" width="1" height="2" fill="#000"/><rect x="1337" y="135" width="1" height="2" fill="#000"/><rect x="50" y="138" width="1295" height="1" fill="#8c8c8c"/></svg>
<svg class="abs" style="left:0;top:0" width="60" height="931"><rect x="47" y="146" width="2" height="1" fill="#000"/><rect x="47" y="155" width="2" height="1" fill="#000"/><rect x="47" y="165" width="2" height="1" fill="#000"/><rect x="47" y="175" width="2" height="1" fill="#000"/><rect x="45" y="185" width="5" height="1" fill="#000"/><text transform="translate(44 185.9) rotate(-90)" font-size="9.5" font-weight="bold" text-anchor="middle" fill="#111" font-family="Liberation Sans">125</text><rect x="47" y="195" width="2" height="1" fill="#000"/><rect x="47" y="205" width="2" height="1" fill="#000"/><rect x="47" y="214" width="2" height="1" fill="#000"/><rect x="47" y="224" width="2" height="1" fill="#000"/><rect x="46" y="234" width="3" height="1" fill="#000"/><rect x="47" y="244" width="2" height="1" fill="#000"/><rect x="47" y="254" width="2" height="1" fill="#000"/><rect x="47" y="263" width="2" height="1" fill="#000"/><rect x="47" y="273" width="2" height="1" fill="#000"/><rect x="45" y="283" width="5" height="1" fill="#000"/><text transform="translate(44 284.05) rotate(-90)" font-size="9.5" font-weight="bold" text-anchor="middle" fill="#111" font-family="Liberation Sans">120</text><rect x="47" y="293" width="2" height="1" fill="#000"/><rect x="47" y="303" width="2" height="1" fill="#000"/><rect x="47" y="312" width="2" height="1" fill="#000"/><rect x="47" y="322" width="2" height="1" fill="#000"/><rect x="46" y="332" width="3" height="1" fill="#000"/><rect x="47" y="342" width="2" height="1" fill="#000"/><rect x="47" y="352" width="2" height="1" fill="#000"/><rect x="47" y="362" width="2" height="1" fill="#000"/><rect x="47" y="371" width="2" height="1" fill="#000"/><rect x="45" y="381" width="5" height="1" fill="#000"/><text transform="translate(44 382.2) rotate(-90)" font-size="9.5" font-weight="bold" text-anchor="middle" fill="#111" font-family="Liberation Sans">115</text><rect x="47" y="391" width="2" height="1" fill="#000"/><rect x="47" y="401" width="2" height="1" fill="#000"/><rect x="47" y="411" width="2" height="1" fill="#000"/><rect x="47" y="420" width="2" height="1" fill="#000"/><rect x="46" y="430" width="3" height="1" fill="#000"/><rect x="47" y="440" width="2" height="1" fill="#000"/><rect x="47" y="450" width="2" height="1" fill="#000"/><rect x="47" y="460" width="2" height="1" fill="#000"/><rect x="47" y="470" width="2" height="1" fill="#000"/><rect x="45" y="479" width="5" height="1" fill="#000"/><text transform="translate(44 480.35) rotate(-90)" font-size="9.5" font-weight="bold" text-anchor="middle" fill="#111" font-family="Liberation Sans">110</text><rect x="47" y="489" width="2" height="1" fill="#000"/><rect x="47" y="499" width="2" height="1" fill="#000"/><rect x="47" y="509" width="2" height="1" fill="#000"/><rect x="47" y="519" width="2" height="1" fill="#000"/><rect x="46" y="528" width="3" height="1" fill="#000"/><rect x="47" y="538" width="2" height="1" fill="#000"/><rect x="47" y="548" width="2" height="1" fill="#000"/><rect x="47" y="558" width="2" height="1" fill="#000"/><rect x="47" y="568" width="2" height="1" fill="#000"/><rect x="45" y="578" width="5" height="1" fill="#000"/><text transform="translate(44 578.5) rotate(-90)" font-size="9.5" font-weight="bold" text-anchor="middle" fill="#111" font-family="Liberation Sans">105</text><rect x="47" y="587" width="2" height="1" fill="#000"/><rect x="47" y="597" width="2" height="1" fill="#000"/><rect x="47" y="607" width="2" height="1" fill="#000"/><rect x="47" y="617" width="2" height="1" fill="#000"/><rect x="46" y="627" width="3" height="1" fill="#000"/><rect x="47" y="636" width="2" height="1" fill="#000"/><rect x="47" y="646" width="2" height="1" fill="#000"/><rect x="47" y="656" width="2" height="1" fill="#000"/><rect x="47" y="666" width="2" height="1" fill="#000"/><rect x="45" y="676" width="5" height="1" fill="#000"/><text transform="translate(44 676.65) rotate(-90)" font-size="9.5" font-weight="bold" text-anchor="middle" fill="#111" font-family="Liberation Sans">100</text><rect x="47" y="685" width="2" height="1" fill="#000"/><rect x="47" y="695" width="2" height="1" fill="#000"/><rect x="47" y="705" width="2" height="1" fill="#000"/><rect x="47" y="715" width="2" height="1" fill="#000"/><rect x="46" y="725" width="3" height="1" fill="#000"/><rect x="47" y="735" width="2" height="1" fill="#000"/><rect x="47" y="744" width="2" height="1" fill="#000"/><rect x="47" y="754" width="2" height="1" fill="#000"/><rect x="47" y="764" width="2" height="1" fill="#000"/><rect x="45" y="774" width="5" height="1" fill="#000"/><text transform="translate(44 774.8) rotate(-90)" font-size="9.5" font-weight="bold" text-anchor="middle" fill="#111" font-family="Liberation Sans">95</text><rect x="47" y="784" width="2" height="1" fill="#000"/><rect x="47" y="793" width="2" height="1" fill="#000"/><rect x="47" y="803" width="2" height="1" fill="#000"/><rect x="47" y="813" width="2" height="1" fill="#000"/><rect x="46" y="823" width="3" height="1" fill="#000"/><rect x="47" y="833" width="2" height="1" fill="#000"/><rect x="47" y="843" width="2" height="1" fill="#000"/><rect x="47" y="852" width="2" height="1" fill="#000"/><rect x="47" y="862" width="2" height="1" fill="#000"/><rect x="45" y="872" width="5" height="1" fill="#000"/><text transform="translate(44 872.9499999999999) rotate(-90)" font-size="9.5" font-weight="bold" text-anchor="middle" fill="#111" font-family="Liberation Sans">90</text><rect x="47" y="882" width="2" height="1" fill="#000"/><rect x="47" y="892" width="2" height="1" fill="#000"/><rect x="47" y="901" width="2" height="1" fill="#000"/><rect x="47" y="911" width="2" height="1" fill="#000"/><rect x="46" y="921" width="3" height="1" fill="#000"/><rect x="50" y="138" width="1" height="793" fill="#8c8c8c"/><path d="M33 160.5 H49" stroke="#000" stroke-width="1" stroke-dasharray="2.5 3.5"/></svg>
<svg class="abs" style="left:36px;top:125px;" width="12" height="12" viewBox="0 0 12 12"><path d="M0 3.5 H2 M5 3.5 H7 M3.5 0 V2 M3.5 5 V7" stroke="#111" stroke-width="1.2"/><path d="M4.5 4.5 L10 10" stroke="#111" stroke-width="1.3"/><path d="M7 10.5 H10.5 V7Z" fill="#111"/></svg>
<div class="abs" style="left:0;top:118px;width:29px;height:813px;background:linear-gradient(90deg,#fdfdfd 0,#f4f4f4 4px,#f0f0f0 8px,#f0f0f0)"></div>
<div class="abs" style="left:29px;top:118px;width:1px;height:813px;background:#b8b8b8"></div>
<svg class="abs" style="left:6px;top:122px;" width="20" height="3" viewBox="0 0 20 3"><rect x="0" y="0" width="2" height="2" fill="#b4b4b4"/><rect x="4" y="0" width="2" height="2" fill="#b4b4b4"/><rect x="8" y="0" width="2" height="2" fill="#b4b4b4"/><rect x="12" y="0" width="2" height="2" fill="#b4b4b4"/><rect x="16" y="0" width="2" height="2" fill="#b4b4b4"/></svg>
<div class="abs" style="left:3px;top:234px;width:24px;height:23px;border:1px solid #6a6a6a;border-radius:3px;background:linear-gradient(#f4f4f4,#d9d9d9)"></div>
<svg class="abs" style="left:3px;top:128px;" width="24" height="24" viewBox="0 0 24 24"><path d="M9 4 L9 17 L12 14 L14.5 19 L16 18 L13.5 13 L17.5 13Z" fill="#fff" stroke="#555a70" stroke-width="1.2"/></svg>
<svg class="abs" style="left:3px;top:154px;" width="24" height="24" viewBox="0 0 24 24"><path d="M7 4 C5 8 7 14 11 17" stroke="#666" fill="none"/><rect x="5" y="7" width="3.5" height="3.5" fill="#fff" stroke="#222"/><path d="M11 10 L18 14 L12 17Z" fill="#222"/><path d="M22 17 V22 H17Z" fill="#111"/></svg>
<svg class="abs" style="left:3px;top:181px;" width="24" height="24" viewBox="0 0 24 24"><path d="M9 4 V16 H20 M5 8 H16 V19" stroke="#3a3c50" stroke-width="2.2" fill="none"/><path d="M6 17 L17 5" stroke="#3a3c50" stroke-width="1.5"/><path d="M22 17 V22 H17Z" fill="#111"/></svg>
<svg class="abs" style="left:3px;top:207px;" width="24" height="24" viewBox="0 0 24 24"><circle cx="10" cy="10" r="6" fill="#f4f4f8" stroke="#3a3d55" stroke-width="1.3"/><rect x="6" y="9" width="8" height="2.5" fill="#b8bccc"/><path d="M14 14 L19 19" stroke="#222" stroke-width="2.6"/><path d="M22 17 V22 H17Z" fill="#111"/></svg>
<svg class="abs" style="left:3px;top:233px;" width="24" height="24" viewBox="0 0 24 24"><path d="M6 6 L18 18" stroke="#444" stroke-width="1" stroke-dasharray="1.5 1.5"/><rect x="10" y="10" width="4" height="4" fill="#fff" stroke="#222"/><path d="M22 17 V22 H17Z" fill="#111"/></svg>
<svg class="abs" style="left:3px;top:259px;" width="24" height="24" viewBox="0 0 24 24"><path d="M4 8 L8 4 L12 8 L8 12Z" fill="#c8682a" stroke="#555"/><rect x="8" y="12" width="10" height="8" fill="#fff" stroke="#333" stroke-width="1.3"/><rect x="11" y="10" width="8" height="6" fill="#d8903a" stroke="#333"/><path d="M22 17 V22 H17Z" fill="#111"/></svg>
<svg class="abs" style="left:3px;top:285px;" width="24" height="24" viewBox="0 0 24 24"><rect x="5" y="6" width="13" height="12" fill="#fff" stroke="#333" stroke-width="1.3"/><path d="M22 17 V22 H17Z" fill="#111"/></svg>
<svg class="abs" style="left:3px;top:312px;" width="24" height="24" viewBox="0 0 24 24"><ellipse cx="11" cy="12" rx="7" ry="6" fill="#fff" stroke="#333" stroke-width="1.3"/><path d="M22 17 V22 H17Z" fill="#111"/></svg>
<svg class="abs" style="left:3px;top:338px;" width="24" height="24" viewBox="0 0 24 24"><path d="M6 5 H13 L16 8 V19 H6Z" fill="#bfe6ee" stroke="#456" stroke-width="1"/><path d="M6 9 H16 M6 13 H16 M10 5 V19" stroke="#456" stroke-width=".8"/><path d="M22 17 V22 H17Z" fill="#111"/></svg>
<svg class="abs" style="left:3px;top:364px;" width="24" height="24" viewBox="0 0 24 24"><circle cx="10" cy="8" r="4.5" fill="#fff" stroke="#333" stroke-width="1.2"/><path d="M4 11 L10 17 L4 19Z" fill="#fff" stroke="#333"/><rect x="10" y="11" width="8" height="7" fill="#fff" stroke="#333" stroke-width="1.2"/><path d="M22 17 V22 H17Z" fill="#111"/></svg>
<svg class="abs" style="left:3px;top:390px;" width="24" height="24" viewBox="0 0 24 24"><path d="M5 19 L10.5 4 H13 L18.5 19 H15.5 L14 15 H9.5 L8 19Z M10.3 12.5 H13.2 L11.8 8Z" fill="#f4f4f6" stroke="#555a70" stroke-width="1.1"/></svg>
<svg class="abs" style="left:3px;top:416px;" width="24" height="24" viewBox="0 0 24 24"><rect x="4" y="5" width="15" height="14" fill="#f2f2f6" stroke="#555a70" stroke-width="1.1"/><path d="M4 9.5 H19 M4 14 H19 M9 5 V19 M14 5 V19" stroke="#555a70" stroke-width="1"/></svg>
<svg class="abs" style="left:3px;top:442px;" width="24" height="24" viewBox="0 0 24 24"><rect x="4" y="4" width="8" height="8" fill="#f4c08a" stroke="#444"/><rect x="8" y="8" width="8" height="8" fill="#f0903a" stroke="#444"/><rect x="12" y="12" width="7" height="7" fill="#e8501a" stroke="#444"/><path d="M22 17 V22 H17Z" fill="#111"/></svg>
<svg class="abs" style="left:3px;top:468px;" width="24" height="24" viewBox="0 0 24 24"><path d="M4 20 L6 14 L14 6 L17 9 L9 17Z" fill="#ddd" stroke="#333" stroke-width="1"/><path d="M13 4 L19 10 L21 8 C22 6 21 4 20 3 C18 2 17 2 15 3Z" fill="#222"/><path d="M22 17 V22 H17Z" fill="#111"/></svg>
<svg class="abs" style="left:3px;top:494px;" width="24" height="24" viewBox="0 0 24 24"><path d="M11 4 L16 14 L13 17 H9 L6 14Z" fill="#fff" stroke="#333" stroke-width="1.2"/><path d="M11 4 V12" stroke="#333"/><path d="M6 18 H16" stroke="#333" stroke-width="1.5"/><path d="M22 17 V22 H17Z" fill="#111"/></svg>
<svg class="abs" style="left:3px;top:520px;" width="24" height="24" viewBox="0 0 24 24"><path d="M3 10 L11 4 L19 10 L17 19 H5Z" fill="#fff" stroke="#444" stroke-width="1.2"/><path d="M4 12 H18 L16.5 19 H5.5Z" fill="#d4932a"/><path d="M22 17 V22 H17Z" fill="#111"/></svg>
<svg class="abs" style="left:3px;top:546px;" width="24" height="24" viewBox="0 0 24 24"><path d="M6 5 L10 9 L7 12 L3 8Z" fill="#c8682a" stroke="#555"/><path d="M8 13 L17 20 L19 15Z" fill="#f0c060"/><path d="M22 17 V22 H17Z" fill="#111"/></svg>

<svg class="abs" style="left:0;top:0" width="1345" height="931" viewBox="0 0 1345 931">
<defs>
<clipPath id="imgclip"><rect x="259" y="162" width="1086" height="769"/></clipPath>
<linearGradient id="bg" x1="0" y1="0" x2="1" y2="1">
 <stop offset="0" stop-color="#2e4a62"/><stop offset="0.35" stop-color="#2f4153"/><stop offset="1" stop-color="#2e3e4f"/>
</linearGradient>
<linearGradient id="panel" x1="380" y1="0" x2="640" y2="0" gradientUnits="userSpaceOnUse">
 <stop offset="0" stop-color="#563f3b"/><stop offset="0.27" stop-color="#583f39"/><stop offset="0.54" stop-color="#694639"/><stop offset="0.85" stop-color="#744737"/><stop offset="1" stop-color="#784735"/>
</linearGradient>
<linearGradient id="panelshade" x1="495" y1="318" x2="512" y2="385" gradientUnits="userSpaceOnUse">
 <stop offset="0" stop-color="#444652" stop-opacity="0"/><stop offset="0.35" stop-color="#444652" stop-opacity="0.25"/><stop offset="0.7" stop-color="#444652" stop-opacity="0.75"/><stop offset="1" stop-color="#444652" stop-opacity="1"/>
</linearGradient>
<linearGradient id="strip" x1="260" y1="380" x2="460" y2="480" gradientUnits="userSpaceOnUse">
 <stop offset="0.28" stop-color="#6e5048"/><stop offset="0.52" stop-color="#7f523c"/><stop offset="0.7" stop-color="#774f40"/><stop offset="0.83" stop-color="#6a4d45"/><stop offset="1" stop-color="#664844"/>
</linearGradient>
<radialGradient id="topface" cx="890" cy="396" r="350" gradientUnits="userSpaceOnUse" gradientTransform="translate(890 396) rotate(6) scale(1 0.5) translate(-890 -396)">
 <stop offset="0" stop-color="#f0a83c"/><stop offset="0.1" stop-color="#ec9a30"/><stop offset="0.15" stop-color="#e88a28"/><stop offset="0.22" stop-color="#dc7622"/><stop offset="0.3" stop-color="#c66c2a"/><stop offset="0.45" stop-color="#985f3b"/><stop offset="0.6" stop-color="#755144"/><stop offset="0.8" stop-color="#55464e"/><stop offset="1" stop-color="#454654"/>
</radialGradient>
<radialGradient id="leftface" cx="510" cy="650" r="450" gradientUnits="userSpaceOnUse" gradientTransform="translate(510 650) rotate(60) scale(1 0.5) translate(-510 -650)">
 <stop offset="0" stop-color="#c06a38"/><stop offset="0.15" stop-color="#ab633e"/><stop offset="0.3" stop-color="#965d43"/><stop offset="0.45" stop-color="#815749"/><stop offset="0.6" stop-color="#6d524f"/><stop offset="0.8" stop-color="#584e54"/><stop offset="1" stop-color="#444959"/>
</radialGradient>
<linearGradient id="rightface" x1="714" y1="500" x2="960" y2="760" gradientUnits="userSpaceOnUse">
 <stop offset="0" stop-color="#343b49"/><stop offset="1" stop-color="#2d3643"/>
</linearGradient>
<linearGradient id="pyr" x1="830" y1="925" x2="930" y2="850" gradientUnits="userSpaceOnUse">
 <stop offset="0" stop-color="#373d4a"/><stop offset="1" stop-color="#2b363f"/>
</linearGradient>
<linearGradient id="cyl" x1="0" y1="380" x2="0" y2="620" gradientUnits="userSpaceOnUse">
 <stop offset="0" stop-color="#2a323a"/><stop offset="1" stop-color="#2b343c"/>
</linearGradient>
</defs>
<g clip-path="url(#imgclip)">
<rect x="259" y="162" width="1086" height="769" fill="#2f3f4e"/>
<rect x="259" y="162" width="1086" height="2" fill="#27323d"/>
<path d="M259 162 L399.8 162 L365 421 L259 433.7 Z" fill="#2c4a62"/>
<!-- back panel -->
<path d="M399.8 162 L480 162 L639.2 202.5 L622.5 336 L610 420 L470 447 L365 421 Z" fill="url(#panel)"/>
<path d="M399.8 162 L480 162 L639.2 202.5 L622.5 336 L610 420 L470 447 L365 421 Z" fill="url(#panelshade)"/>
<!-- floor strip -->
<path d="M259 433.7 L364.3 421 L481 447.4 L481 491 L455 489.3 L259 447.4 Z" fill="url(#strip)"/>
<path d="M364.3 421 L481 447.4" stroke="#3a3540" stroke-width="2" opacity="0.7"/>
<!-- cylinder shadow -->
<path d="M943 410 L1054 420 L1040 470 L992 598 Q985 615 974 619 L950 612 Z" fill="url(#cyl)"/>
<ellipse cx="998" cy="407" rx="56" ry="32" fill="#2b3139" transform="rotate(10 998 407)"/>
<!-- pyramid -->
<path d="M876.7 792 L801 931 L1124 931 Z" fill="url(#pyr)"/>
<path d="M876.7 792 L801 931" stroke="#5a6270" stroke-width="1" opacity="0.6"/>
<!-- cone -->
<path d="M667 889 L694 931 L640 931 Z" fill="#2a2f38"/>
<ellipse cx="630" cy="919" rx="46" ry="21" fill="#554d4b" stroke="#56606a" stroke-width="1" stroke-opacity="0.5" transform="rotate(-33 630 919)"/>
<!-- circles -->
<circle cx="908" cy="300.6" r="57.5" fill="#e2e35f" stroke="#3a3a30" stroke-width="1"/>
<circle cx="346.3" cy="734.7" r="57.5" fill="#e2e35f" stroke="#3a3a30" stroke-width="1"/>
<!-- cube -->
<path d="M714 542 L984 437 L963 737 L693 845 Z" fill="url(#rightface)"/>
<path d="M486 394 L714 542 L693 845 L467 694 Z" fill="url(#leftface)"/>
<path d="M754 292 L984 437 L714 542 L486 394 Z" fill="url(#topface)"/>
<path d="M486 394 L714 542 L984 437 M714 542 L693 845" stroke="#6a6a78" stroke-width="1" opacity="0.35" fill="none"/>
<path d="M754 292 L984 437 L963 737 L693 845 L467 694 L486 394 Z" fill="none" stroke="#282626" stroke-width="2.4" stroke-linejoin="miter"/>
<!-- arrows -->
<path d="M547.7 760 L559 781.3 L552.5 781.9 L550.6 851.5 L549.6 851.5 L544.2 781.9 L537.1 781.3 Z" fill="#ff3535"/>
<path d="M1111.4 633.1 L1039.2 672.4 L1039.6 678.8 L1016.1 678.4 L1029.8 660.9 L1033.2 664.7 Z" fill="#ff3535"/>
</g>
<rect x="751.5" y="289.5" width="5" height="5" fill="#fff" stroke="#111" stroke-width="0.8"/><rect x="753" y="291" width="2" height="2" fill="#000"/><rect x="981.5" y="434.5" width="5" height="5" fill="#fff" stroke="#111" stroke-width="0.8"/><rect x="983" y="436" width="2" height="2" fill="#000"/><rect x="960.5" y="734.5" width="5" height="5" fill="#fff" stroke="#111" stroke-width="0.8"/><rect x="962" y="736" width="2" height="2" fill="#000"/><rect x="690.5" y="842.5" width="5" height="5" fill="#fff" stroke="#111" stroke-width="0.8"/><rect x="692" y="844" width="2" height="2" fill="#000"/><rect x="464.5" y="691.5" width="5" height="5" fill="#fff" stroke="#111" stroke-width="0.8"/><rect x="466" y="693" width="2" height="2" fill="#000"/><rect x="483.5" y="391.5" width="5" height="5" fill="#fff" stroke="#111" stroke-width="0.8"/><rect x="485" y="393" width="2" height="2" fill="#000"/></svg>
</body></html>
